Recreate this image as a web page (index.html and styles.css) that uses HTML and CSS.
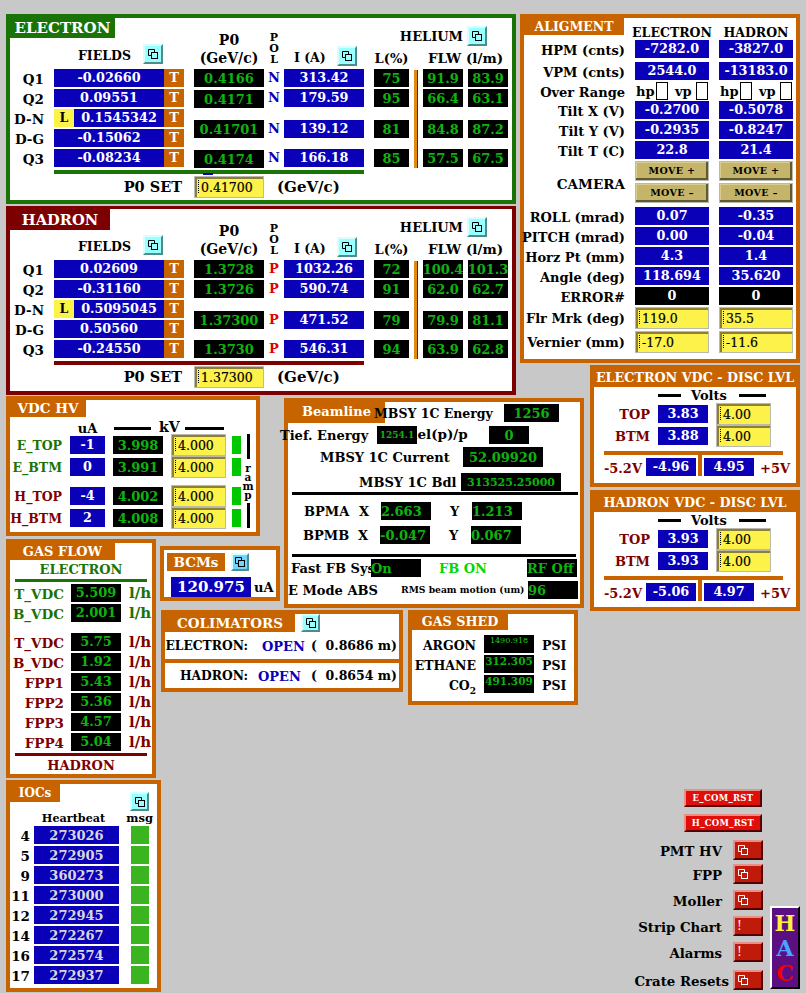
FILE: index.html
```html
<!DOCTYPE html>
<html lang="en">
<head>
<meta charset="utf-8">
<title>HAC</title>
<link rel="stylesheet" href="styles.css">
</head>
<body>
<svg class="defs" width="0" height="0" aria-hidden="true">
  <symbol id="rel" viewBox="0 0 12 12"><path d="M1.5 7.5V1.5H7.5V4.5M1.5 7.5H4.5" fill="none" stroke="currentColor" stroke-width="1"/><rect x="4.5" y="4.5" width="6" height="6" fill="none" stroke="currentColor" stroke-width="1"/></symbol>
</svg>
<main class="page">

  <section class="panel spec electron">
    <h2 class="tab tab-electron">ELECTRON</h2>
    <div class="head-fields"><span>FIELDS</span><span class="rbtn"><svg class="ic"><use href="#rel"/></svg></span></div>
    <div class="head-p0">P0<br>(GeV/c)</div>
    <div class="head-pol">P<br>O<br>L</div>
    <div class="head-i"><span>I (A)</span><span class="rbtn"><svg class="ic"><use href="#rel"/></svg></span></div>
    <div class="head-l">L(%)</div>
    <div class="head-flw">FLW (l/m)</div>
    <div class="head-he"><span>HELIUM</span><span class="rbtn"><svg class="ic"><use href="#rel"/></svg></span></div>

    <div class="lab r1">Q1</div><div class="field r1"><span class="val grow">-0.02660</span><span class="t">T</span></div>
    <div class="lab r2">Q2</div><div class="field r2"><span class="val grow">0.09551</span><span class="t">T</span></div>
    <div class="lab r3">D-N</div><div class="field r3"><span class="l">L</span><span class="val grow">0.1545342</span><span class="t">T</span></div>
    <div class="lab r4">D-G</div><div class="field r4"><span class="val grow">-0.15062</span><span class="t">T</span></div>
    <div class="lab r5">Q3</div><div class="field r5"><span class="val grow">-0.08234</span><span class="t">T</span></div>

    <div class="blk p0 r1">0.4166</div><div class="blk p0 r2">0.4171</div><div class="blk p0 r34">0.41701</div><div class="blk p0 r5">0.4174</div>
    <div class="pol pol-n r1">N</div><div class="pol pol-n r2">N</div><div class="pol pol-n r34">N</div><div class="pol pol-n r5">N</div>
    <div class="val cur r1">313.42</div><div class="val cur r2">179.59</div><div class="val cur r34">139.12</div><div class="val cur r5">166.18</div>
    <div class="blk lev r1">75</div><div class="blk lev r2">95</div><div class="blk lev r34">81</div><div class="blk lev r5">85</div>
    <div class="hebar"></div>
    <div class="blk f1 r1">91.9</div><div class="blk f2 r1">83.9</div>
    <div class="blk f1 r2">66.4</div><div class="blk f2 r2">63.1</div>
    <div class="blk f1 r34">84.8</div><div class="blk f2 r34">87.2</div>
    <div class="blk f1 r5">57.5</div><div class="blk f2 r5">67.5</div>

    <div class="rule rule-electron"></div>
    <div class="ghost"></div>
    <div class="set-lab">P0 SET</div>
    <div class="inp set-inp"><i></i>0.41700</div>
    <div class="set-unit">(GeV/c)</div>
  </section>

  <section class="panel spec hadron">
    <h2 class="tab tab-hadron">HADRON</h2>
    <div class="head-fields"><span>FIELDS</span><span class="rbtn"><svg class="ic"><use href="#rel"/></svg></span></div>
    <div class="head-p0">P0<br>(GeV/c)</div>
    <div class="head-pol">P<br>O<br>L</div>
    <div class="head-i"><span>I (A)</span><span class="rbtn"><svg class="ic"><use href="#rel"/></svg></span></div>
    <div class="head-l">L(%)</div>
    <div class="head-flw">FLW (l/m)</div>
    <div class="head-he"><span>HELIUM</span><span class="rbtn"><svg class="ic"><use href="#rel"/></svg></span></div>

    <div class="lab r1">Q1</div><div class="field r1"><span class="val grow">0.02609</span><span class="t">T</span></div>
    <div class="lab r2">Q2</div><div class="field r2"><span class="val grow">-0.31160</span><span class="t">T</span></div>
    <div class="lab r3">D-N</div><div class="field r3"><span class="l">L</span><span class="val grow">0.5095045</span><span class="t">T</span></div>
    <div class="lab r4">D-G</div><div class="field r4"><span class="val grow">0.50560</span><span class="t">T</span></div>
    <div class="lab r5">Q3</div><div class="field r5"><span class="val grow">-0.24550</span><span class="t">T</span></div>

    <div class="blk p0 r1">1.3728</div><div class="blk p0 r2">1.3726</div><div class="blk p0 r34">1.37300</div><div class="blk p0 r5">1.3730</div>
    <div class="pol pol-p r1">P</div><div class="pol pol-p r2">P</div><div class="pol pol-p r34">P</div><div class="pol pol-p r5">P</div>
    <div class="val cur r1">1032.26</div><div class="val cur r2">590.74</div><div class="val cur r34">471.52</div><div class="val cur r5">546.31</div>
    <div class="blk lev r1">72</div><div class="blk lev r2">91</div><div class="blk lev r34">79</div><div class="blk lev r5">94</div>
    <div class="hebar"></div>
    <div class="blk f1 r1">100.4</div><div class="blk f2 r1">101.3</div>
    <div class="blk f1 r2">62.0</div><div class="blk f2 r2">62.7</div>
    <div class="blk f1 r34">79.9</div><div class="blk f2 r34">81.1</div>
    <div class="blk f1 r5">63.9</div><div class="blk f2 r5">62.8</div>

    <div class="rule rule-hadron"></div>
    <div class="set-lab">P0 SET</div>
    <div class="inp set-inp"><i></i>1.37300</div>
    <div class="set-unit">(GeV/c)</div>
  </section>

  <section class="panel alignment">
    <h2 class="tab tab-align">ALIGMENT</h2>
    <div class="al-h c1">ELECTRON</div><div class="al-h c2">HADRON</div>

    <div class="al-l">HPM (cnts)</div><div class="val c1">-7282.0</div><div class="val c2">-3827.0</div>
    <div class="al-l">VPM (cnts)</div><div class="val c1">2544.0</div><div class="val c2">-13183.0</div>
    <div class="al-l">Over Range</div>
    <div class="over c1"><span>hp</span><b></b><span>vp</span><b></b></div>
    <div class="over c2"><span>hp</span><b></b><span>vp</span><b></b></div>
    <div class="al-l">Tilt X (V)</div><div class="val c1">-0.2700</div><div class="val c2">-0.5078</div>
    <div class="al-l">Tilt Y (V)</div><div class="val c1">-0.2935</div><div class="val c2">-0.8247</div>
    <div class="al-l">Tilt T (C)</div><div class="val c1">22.8</div><div class="val c2">21.4</div>
    <div class="al-l cam">CAMERA</div>
    <div class="move c1"><span>MOVE +</span></div><div class="move c2"><span>MOVE +</span></div>
    <div class="move c1"><span>MOVE –</span></div><div class="move c2"><span>MOVE –</span></div>
    <div class="al-l">ROLL (mrad)</div><div class="val c1">0.07</div><div class="val c2">-0.35</div>
    <div class="al-l">PITCH (mrad)</div><div class="val c1">0.00</div><div class="val c2">-0.04</div>
    <div class="al-l">Horz Pt (mm)</div><div class="val c1">4.3</div><div class="val c2">1.4</div>
    <div class="al-l">Angle (deg)</div><div class="val c1">118.694</div><div class="val c2">35.620</div>
    <div class="al-l">ERROR#</div><div class="val err c1">0</div><div class="val err c2">0</div>
    <div class="al-l al-i">Flr Mrk (deg)</div><div class="inp c1"><i></i>119.0</div><div class="inp c2"><i></i>35.5</div>
    <div class="al-l al-i">Vernier (mm)</div><div class="inp c1"><i></i>-17.0</div><div class="inp c2"><i></i>-11.6</div>
  </section>

  <section class="panel disc disc-e">
    <h2 class="disc-title">ELECTRON VDC - DISC LVL</h2>
    <div class="volts"><s class="vl1"></s><span>Volts</span><s class="vl2"></s></div>
    <div class="disc-grid">
      <div class="disc-l">TOP</div><div class="val">3.83</div><div class="inp"><i></i>4.00</div>
      <div class="disc-l">BTM</div><div class="val">3.88</div><div class="inp"><i></i>4.00</div>
    </div>
    <div class="disc-sep"></div>
    <div class="disc-pw"><span class="pw-l">-5.2V</span><div class="val">-4.96</div><s class="stem"></s><div class="val">4.95</div><span class="pw-r">+5V</span></div>
  </section>

  <section class="panel disc disc-h">
    <h2 class="disc-title">HADRON VDC - DISC LVL</h2>
    <div class="volts"><s class="vl1"></s><span>Volts</span><s class="vl2"></s></div>
    <div class="disc-grid">
      <div class="disc-l">TOP</div><div class="val">3.93</div><div class="inp"><i></i>4.00</div>
      <div class="disc-l">BTM</div><div class="val">3.93</div><div class="inp"><i></i>4.00</div>
    </div>
    <div class="disc-sep"></div>
    <div class="disc-pw"><span class="pw-l">-5.2V</span><div class="val">-5.06</div><s class="stem"></s><div class="val">4.97</div><span class="pw-r">+5V</span></div>
  </section>

  <section class="panel hv">
    <h2 class="tab tab-hv">VDC HV</h2>
    <div class="hv-ua">uA</div>
    <div class="hv-kv"><s class="kl1"></s><span>kV</span><s class="kl2"></s></div>
    <div class="hv-l el r1">E_TOP</div><div class="val h18 r1">-1</div><div class="blk hv-b r1">3.998</div><div class="inp r1"><i></i>4.000</div><div class="hv-g r1"></div>
    <div class="hv-l el r2">E_BTM</div><div class="val h18 r2">0</div><div class="blk hv-b r2">3.991</div><div class="inp r2"><i></i>4.000</div><div class="hv-g r2"></div>
    <div class="hv-l hd r3">H_TOP</div><div class="val h18 r3">-4</div><div class="blk hv-b r3">4.002</div><div class="inp r3"><i></i>4.000</div><div class="hv-g r3"></div>
    <div class="hv-l hd r4">H_BTM</div><div class="val h18 r4">2</div><div class="blk hv-b r4">4.008</div><div class="inp r4"><i></i>4.000</div><div class="hv-g r4"></div>
    <div class="ramp"><s class="rl1"></s><span>r<br>a<br>m<br>p</span><s class="rl2"></s></div>
  </section>

  <section class="panel beamline">
    <h2 class="tab tab-beam">Beamline</h2>
    <div class="bl-row bl-1"><span class="bl-t">MBSY 1C Energy</span><div class="blk">1256</div></div>
    <div class="bl-row bl-2"><span class="bl-t t-tief">Tief. Energy</span><span class="bl-t t-del">del(p)/p</span><div class="blk b-tief">1254.1</div><div class="blk b-del">0</div></div>
    <div class="bl-row bl-3"><span class="bl-t">MBSY 1C Current</span><div class="blk">52.09920</div></div>
    <div class="bl-row bl-4"><span class="bl-t">MBSY 1C Bdl</span><div class="blk">313525.25000</div></div>
    <div class="bl-hr hr1"></div>
    <div class="bpm bpm-a"><span class="bpm-n">BPMA</span><span class="bpm-x">X</span><div class="blk bl-left">2.663</div><span class="bpm-y">Y</span><div class="blk bl-left">1.213</div></div>
    <div class="bpm bpm-b"><span class="bpm-n">BPMB</span><span class="bpm-x">X</span><div class="blk bl-left">-0.047</div><span class="bpm-y">Y</span><div class="blk bl-left">0.067</div></div>
    <div class="bl-hr hr2"></div>
    <div class="fb"><span class="fb-t">Fast FB Sys</span><div class="blk bl-left">On</div><span class="fb-on">FB ON</span><div class="blk bl-left">RF Off</div></div>
    <div class="emode"><span class="em-t">E Mode ABS</span><span class="rms">RMS beam motion (um)</span><div class="blk bl-left">96</div></div>
  </section>

  <section class="panel gas">
    <h2 class="tab tab-gas">GAS FLOW</h2>
    <div class="gas-h el">ELECTRON</div>
    <div class="gas-hr gr-e"></div>
    <div class="gas-row el"><span>T_VDC</span><div class="blk">5.509</div><em>l/h</em></div>
    <div class="gas-row el"><span>B_VDC</span><div class="blk">2.001</div><em>l/h</em></div>
    <div class="gas-row hd gas-gap"><span>T_VDC</span><div class="blk">5.75</div><em>l/h</em></div>
    <div class="gas-row hd"><span>B_VDC</span><div class="blk">1.92</div><em>l/h</em></div>
    <div class="gas-row hd"><span>FPP1</span><div class="blk">5.43</div><em>l/h</em></div>
    <div class="gas-row hd"><span>FPP2</span><div class="blk">5.36</div><em>l/h</em></div>
    <div class="gas-row hd"><span>FPP3</span><div class="blk">4.57</div><em>l/h</em></div>
    <div class="gas-row hd"><span>FPP4</span><div class="blk">5.04</div><em>l/h</em></div>
    <div class="gas-hr gr-h"></div>
    <div class="gas-h hd">HADRON</div>
  </section>

  <section class="panel bcm">
    <div class="bcm-top"><h2 class="tab-bcm">BCMs</h2><span class="rbtn rbtn-blue"><svg class="ic"><use href="#rel"/></svg></span></div>
    <div class="bcm-val"><div class="val big">120.975</div><span>uA</span></div>
  </section>

  <section class="panel colim">
    <div class="col-top"><h2 class="tab-col">COLIMATORS</h2><span class="rbtn"><svg class="ic"><use href="#rel"/></svg></span></div>
    <div class="col-row col-e"><span class="col-l">ELECTRON:</span><span class="col-o">OPEN</span><span class="col-v">( &nbsp;0.8686 m)</span></div>
    <div class="col-row col-h"><span class="col-l">HADRON:</span><span class="col-o">OPEN</span><span class="col-v">( &nbsp;0.8654 m)</span></div>
  </section>

  <section class="panel shed">
    <h2 class="tab tab-shed">GAS SHED</h2>
    <div class="shed-grid">
      <span class="shed-l">ARGON</span><div class="blk tiny">1490.918</div><span class="shed-u">PSI</span>
      <span class="shed-l">ETHANE</span><div class="blk small">312.305</div><span class="shed-u">PSI</span>
      <span class="shed-l">CO<sub>2</sub></span><div class="blk small">491.309</div><span class="shed-u">PSI</span>
    </div>
  </section>

  <section class="panel iocs">
    <h2 class="tab tab-ioc">IOCs</h2>
    <span class="rbtn ioc-btn"><svg class="ic"><use href="#rel"/></svg></span>
    <div class="ioc-hb">Heartbeat</div><div class="ioc-msg">msg</div>
    <div class="ioc-n">4</div><div class="val hb">273026</div><div class="ioc-g"></div>
    <div class="ioc-n">5</div><div class="val hb">272905</div><div class="ioc-g"></div>
    <div class="ioc-n">9</div><div class="val hb">360273</div><div class="ioc-g"></div>
    <div class="ioc-n">11</div><div class="val hb">273000</div><div class="ioc-g"></div>
    <div class="ioc-n">12</div><div class="val hb">272945</div><div class="ioc-g"></div>
    <div class="ioc-n">14</div><div class="val hb">272267</div><div class="ioc-g"></div>
    <div class="ioc-n">16</div><div class="val hb">272574</div><div class="ioc-g"></div>
    <div class="ioc-n">17</div><div class="val hb">272937</div><div class="ioc-g"></div>
  </section>

  <nav class="controls">
    <div class="ctl-col">
      <div class="com com-e">E_COM_RST</div>
      <div class="com com-h">H_COM_RST</div>
      <div class="nav n1"><span>PMT HV</span><div class="rbt"><svg class="ic"><use href="#rel"/></svg></div></div>
      <div class="nav n2"><span>FPP</span><div class="rbt"><svg class="ic"><use href="#rel"/></svg></div></div>
      <div class="nav n3"><span>Moller</span><div class="rbt"><svg class="ic"><use href="#rel"/></svg></div></div>
      <div class="nav n4"><span>Strip Chart</span><div class="rbt">!</div></div>
      <div class="nav n5"><span>Alarms</span><div class="rbt">!</div></div>
      <div class="nav n6"><span>Crate Resets</span><div class="rbt"><svg class="ic"><use href="#rel"/></svg></div></div>
    </div>
    <div class="hac"><span class="h-h">H</span><span class="h-a">A</span><span class="h-c">C</span></div>
  </nav>
</main>
</body>
</html>
```

FILE: styles.css
```css
:root{
  --bg:#c8c8c8; --green:#1a7306; --maroon:#7d0000; --orange:#c86400; --blue:#0a00b8;
  --lit:#0fb30f; --yellow:#fdf24a;
}
*{box-sizing:border-box}
html,body{margin:0;padding:0;background:var(--bg)}
body{font:bold 13px/1 "DejaVu Serif",serif;color:#000;width:806px;height:993px;overflow:hidden}
.defs{display:block;height:0}
h2{margin:0;font:inherit}
s,em{text-decoration:none;font-style:normal}

.page{display:grid;width:806px;height:993px;padding:14px 6px 0;
  grid-template-columns:155px 123px 124px 112px 70px 210px;
  grid-template-rows:192px 159px 31px 94px 49px 71px 170px 213px}
.page>*{align-self:start;justify-self:start}

.panel{background:#fff;border:4px solid var(--orange);font-size:12.5px}
.tab{display:flex;align-items:center;justify-content:center;color:#fff;background:var(--orange);white-space:nowrap}

/* shared widgets */
.val,.blk{display:flex;align-items:center;justify-content:center;height:18px;font-size:13px;white-space:nowrap;overflow:hidden}
.val{background:var(--blue);color:#fff;font-size:12.8px}
.blk{background:#000;color:var(--lit)}
.bl-left{justify-content:flex-start}
.inp{display:flex;align-items:center;height:22px;background:var(--yellow);border:1px solid #b9b9ae;box-shadow:inset 2px 2px 0 #8d7f33;font-weight:400;font-size:12.5px;color:#000;padding:3px 0 0 3px;white-space:nowrap;-webkit-text-stroke:.2px #000}
.inp i{width:0;height:13px;border-left:1px dotted #000;margin-right:2px;margin-top:-4px}
.rbtn{display:flex;align-items:center;justify-content:center;width:20px;height:20px;background:#99ffff;border:2px solid;border-color:#d6ffff #4c8c8c #4c8c8c #d6ffff;color:#000}
.rbtn-blue{width:18px;height:18px;background:#6fd4ff}
.ic{width:12px;height:12px}

/* spectrometer panels */
.spec{width:510px;height:190px;display:grid;align-items:start;
  grid-template-columns:44px 130px 10px 70px 20px 80px 10px 35px 14px 40px 5px 40px;
  grid-template-rows:51px repeat(5,20px) 7px 22px}
.electron{grid-column:1/5;grid-row:1/2;border-color:var(--green)}
.hadron{grid-column:1/5;grid-row:2/4;height:189px;border-color:var(--maroon);border-top-width:3px;grid-template-rows:51px repeat(5,20px) 6px 22px}
.spec .tab{grid-row:1;grid-column:1/-1;justify-self:start;font-size:15px;height:20px;padding-top:1px}
.tab-electron{width:105px;background:var(--green)}
.tab-hadron{width:100px;height:21px!important;background:var(--maroon);font-size:14.7px!important;padding-top:2px!important}
.head-fields{grid-row:1;grid-column:2;display:flex;align-items:center;margin:26px 0 0 24px;height:20px}
.head-fields span:first-child{padding-top:4px;width:51px}
.head-fields .rbtn{margin-left:14px}
.head-p0{grid-row:1;grid-column:4;justify-self:center;text-align:center;line-height:18px;margin-top:13px;white-space:nowrap;font-size:14px}
.head-pol{grid-row:1;grid-column:5;text-align:center;line-height:11px;margin-top:14px;font-size:11px}
.head-i{grid-row:1;grid-column:6;display:flex;align-items:center;margin:28px 0 0 10px;height:20px;white-space:nowrap}
.head-i span:first-child{padding-top:4px;width:32px}
.head-i .rbtn{margin-left:11px}
.head-l{grid-row:1;grid-column:8;justify-self:center;text-align:center;margin-top:34px;white-space:nowrap;font-size:13px}
.head-flw{grid-row:1;grid-column:10/13;justify-self:center;text-align:center;margin-top:34px;white-space:nowrap;font-size:13.5px}
.head-he{grid-row:1;grid-column:8/13;display:flex;align-items:center;justify-content:flex-end;margin:8px 21px 0 0;height:20px;gap:4px;font-size:13px}
.spec .r1{grid-row:2}.spec .r2{grid-row:3}.spec .r3{grid-row:4}.spec .r4{grid-row:5}.spec .r5{grid-row:6}
.spec .r34{grid-row:4/6;align-self:center}
.electron .p0.r2,.electron .p0.r5{margin-top:1px}
.lab{grid-column:1;text-align:right;line-height:20px;white-space:nowrap;padding-right:10px;font-size:13.5px}
.field{grid-column:2;display:flex;height:18px}
.grow{flex:1}
.t{width:20px;background:var(--orange);color:#fff;text-align:center;line-height:18px;font-size:13px}
.l{width:20px;background:var(--yellow);color:#000;text-align:center;line-height:18px;font-weight:700}
.p0{grid-column:4}.cur{grid-column:6}.lev{grid-column:8}.f1{grid-column:10}.f2{grid-column:12}
.pol{grid-column:5;text-align:center;line-height:18px;font-size:13px}
.pol-n{color:var(--blue)}.pol-p{color:#e00000}
.hebar{grid-row:2/7;grid-column:9;width:4px;height:98px;margin:1px 0 0 5px;background:#e08a10;border-right:1px solid #333}
.rule{grid-row:7;grid-column:2/7;height:4px;margin-top:1px}
.rule-electron{background:var(--green)}.rule-hadron{background:var(--maroon)}
.ghost{grid-row:7;grid-column:4;width:10px;height:2px;margin:4px 0 0 9px;background:var(--blue)}
.set-lab{grid-row:8;grid-column:2;text-align:right;padding-right:2px;font-size:14.5px;line-height:22px}
.set-inp{grid-row:8;grid-column:4}
.set-unit{grid-row:8;grid-column:5/9;margin-left:13px;font-size:15px;line-height:22px}

/* alignment */
.alignment{grid-column:5/7;grid-row:1/3;width:280px;height:349px;display:grid;align-items:start;
  grid-template-columns:101px 10px 74px 10px 74px;
  grid-template-rows:22px 22px 20px 19px 20px 20px 20px 22px 24px repeat(5,20px) 24px 24px}
.tab-align{grid-row:1;grid-column:1/-1;justify-self:start;width:100px;height:17px;font-size:12.5px;padding-top:2px}
.al-h{grid-row:1;font-size:12.5px;justify-self:center;text-align:center;white-space:nowrap;align-self:end;margin-bottom:1px}
.al-l{grid-column:1;justify-self:end;line-height:22px;white-space:nowrap;font-size:13px}
.al-i{margin-top:1px}
.alignment .c1{grid-column:3}.alignment .c2{grid-column:5}
.alignment .inp{height:22px}
.over{display:flex;align-items:center;height:18px;font-size:13px;white-space:nowrap}
.over span{width:21px;padding-left:1px}
.over span:nth-of-type(2){width:22px}
.over b{display:block;width:12px;height:18px;border:1px solid #000;background:#fff;margin-right:6px}
.over b:last-child{margin-right:0}
.cam{grid-row:8/10;align-self:center;font-size:13.5px}
.move{height:20px;border:1px solid #b9b9ae;background:#c4b56a;display:flex;align-items:center;justify-content:center;box-shadow:inset -2px -2px 0 #5f5a30,inset 1px 1px 0 #d8cc90;font-size:9.5px;letter-spacing:.4px}
.err{background:#000}

/* disc */
.disc{grid-column:6;width:210px}
.disc-e{grid-row:3/5;height:122px}
.disc-h{grid-row:5/7;height:121px}
.disc-title{height:18px;background:var(--orange);color:#fff;font-size:12.75px;line-height:18px;text-align:center;white-space:nowrap}
.volts{display:flex;align-items:center;height:16px;font-size:13px;padding-left:64px}
.volts s{height:3px;background:#000;display:block}
.vl1{width:23px;margin-right:10px}.vl2{width:27px;margin-left:12px}
.disc-grid{display:grid;grid-template-columns:56px 50px 55px;column-gap:8px;grid-auto-rows:22px;align-items:center}
.disc-l{color:var(--maroon);text-align:right;font-size:13px}
.disc-grid .val{height:18px}
.disc-sep{height:4px;width:179px;margin:4px 0 0 10px;background:var(--orange)}
.disc-pw{display:flex;align-items:flex-start;height:22px;color:var(--maroon)}
.disc-pw .val{width:50px;margin-top:3px}
.pw-l{width:50px;padding:7px 2px 0 0;text-align:right;font-size:13px;margin-right:2px}
.stem{display:block;width:4px;height:21px;margin:0 2px;background:var(--orange)}
.pw-r{margin-left:6px;padding-top:7px;font-size:13px}

/* HV */
.hv{grid-column:1/3;grid-row:4/6;width:254px;height:140px;display:grid;align-items:start;
  grid-template-columns:60px 35px 8px 50px 8px 55px 6px 9px 3px 8px;
  grid-template-rows:34px 22px 22px 7px 22px 22px}
.tab-hv{grid-row:1;grid-column:1/-1;justify-self:start;width:76px;height:17px;font-size:13.5px}
.hv-ua{grid-row:1;grid-column:2;align-self:end;text-align:center;font-size:13px;margin-bottom:-1px}
.hv-kv{grid-row:1;grid-column:4/7;display:flex;align-items:flex-end;align-self:end;font-size:14px;padding-left:1px}
.hv-kv s{display:block;height:3px;background:#000;margin-bottom:4px}
.kl1{width:37px;margin-right:8px}.kl2{width:39px;margin-left:5px}
.hv .r1{grid-row:2}.hv .r2{grid-row:3}.hv .r3{grid-row:5}.hv .r4{grid-row:6}
.hv-l{grid-column:1;text-align:right;padding-right:8px;line-height:23px;white-space:nowrap;font-size:12.5px}
.el{color:var(--green)}.hd{color:var(--maroon)}
.hv .val{grid-column:2;margin-top:2px}
.hv-b{grid-column:4;margin-top:2px}
.hv .inp{grid-column:6}
.hv-g{grid-column:8;width:9px;height:18px;margin-top:2px;background:#00c800}
.ramp{grid-row:2/7;grid-column:10;display:flex;flex-direction:column;align-items:center;font-size:10.5px;line-height:9px;text-align:center}
.ramp s{display:block;width:3px;background:#000}
.rl1{height:25px;margin-bottom:5px}.rl2{height:25px;margin-top:3px}

/* beamline */
.beamline{grid-column:3/6;grid-row:4/7;margin-top:2px;width:300px;height:210px;display:flex;flex-direction:column}
.tab-beam{width:97px;height:21px;font-size:13px;margin-bottom:-19px;flex:none;padding-bottom:2px}
.bl-row{display:flex;align-items:center;font-size:13px;white-space:nowrap;flex:none}
.bl-1{height:18px;margin:0 0 0 86px}.bl-1 .bl-t{width:130px;font-size:12.5px;padding-top:3px}.bl-1 .blk{width:55px}
.bl-2{display:grid;grid-template-columns:97px 40px 72px 40px;align-items:center;height:18px;margin:4px 0 0 -8px}
.bl-2>*{grid-row:1}
.t-tief{grid-column:1}
.t-del{grid-column:2/4;margin-left:31px;font-size:13.5px}
.b-tief{grid-column:2;font-size:9px}
.b-del{grid-column:4}
.bl-3{height:20px;margin:3px 0 0 32px}.bl-3 .bl-t{width:143px}.bl-3 .blk{width:80px;height:20px}
.bl-4{height:18px;margin:6px 0 0 71px}.bl-4 .bl-t{width:102px}.bl-4 .blk{width:100px;font-size:11px}
.bl-hr{height:3px;background:#000;flex:none}
.hr1{margin:1px 2px 0 4px}
.hr2{margin:10px 4px 0 4px}
.bpm{display:flex;align-items:center;height:18px;font-size:13px;flex:none}
.bpm .blk{width:50px}
.bpm-a{margin-top:7px;padding-left:16px}
.bpm-b{margin-top:6px;padding-left:15px}
.bpm-n{width:55px}.bpm-x{width:22px}.bpm-y{width:22px;margin-left:19px}
.fb{display:flex;align-items:center;height:18px;margin-top:2px;padding-left:3px;flex:none}
.fb .blk{width:50px}
.fb-t{width:80px;white-space:nowrap;font-size:13px}
.fb-on{color:#00d800;width:106px;padding-left:18px;font-size:13px;white-space:nowrap}
.emode{display:flex;align-items:center;height:18px;margin-top:4px;flex:none;white-space:nowrap}
.emode .blk{width:50px;margin-left:4px}
.em-t{width:113px;font-size:13px}
.rms{width:123px;font-size:9.2px}

/* gas */
.gas{grid-column:1;grid-row:6/8;width:150px;height:239px}
.tab-gas{width:105px;height:17px;font-size:13px}
.gas-h{text-align:center;font-size:13px;line-height:19px}
.gas-hr{height:3px;margin:0 5px}
.gr-e{background:var(--green);margin-bottom:2px}
.gr-h{background:var(--maroon)}
.gas-row{display:grid;grid-template-columns:61px 50px auto;height:20px;align-items:start;line-height:20px;font-size:13.5px;white-space:nowrap}
.gas-row span{text-align:right;padding-right:7px}
.gas-row em{padding-left:8px;font-size:15px;line-height:18px}
.gas-gap{margin-top:9px}

/* bcm */
.bcm{grid-column:2;grid-row:6/7;margin:7px 0 0 -1px;width:120px;height:55px;padding:3px 0 0 3px}
.bcm-top{display:flex;gap:6px}
.tab-bcm{width:58px;height:18px;background:var(--orange);color:#fff;text-align:center;line-height:18px;font-size:13.5px}
.bcm-val{display:flex;align-items:center;margin:6px 0 0 4px;gap:3px;font-size:13px}
.big{width:80px;height:20px;font-size:15px}

/* colimators */
.colim{grid-column:2/4;grid-row:7;width:242px;height:82px;background:var(--orange)}
.col-top{display:flex;align-items:center;height:18px;background:#fff}
.tab-col{width:130px;height:18px;background:var(--orange);color:#fff;text-align:center;line-height:18px;font-size:13.5px;margin-right:6px}
.col-top .rbtn{width:19px;height:18px}
.col-row{display:flex;align-items:center;background:#fff;font-size:12.5px;white-space:nowrap;padding-top:2px}
.col-e{height:27px}.col-h{height:25px;margin-top:4px}
.col-l{width:83px;display:flex;justify-content:flex-end;font-size:12.3px}
.col-o{color:var(--blue);font-size:13px}
.col-e .col-o{margin-left:14px;width:49px}
.col-h .col-o{margin-left:10px;width:53px}

/* gas shed */
.shed{grid-column:4/6;grid-row:7;width:170px;height:95px}
.tab-shed{width:96px;height:16px;font-size:12.75px}
.shed-grid{display:grid;grid-template-columns:64px 50px auto;column-gap:8px;grid-auto-rows:20px;margin-top:5px;align-items:start;font-size:12.5px;line-height:21px}
.shed-l{text-align:right;white-space:nowrap}
.shed-l sub{font-size:9px;line-height:0}
.tiny{font-size:8px;align-items:flex-start;padding-top:2px;font-weight:400;line-height:1;color:#19d019}
.small{font-size:10.5px;align-items:flex-start;padding-top:1px;line-height:1}

/* iocs */
.iocs{grid-column:1;grid-row:8;width:155px;height:212px;display:grid;align-items:start;
  grid-template-columns:24px 85px 12px 18px;grid-template-rows:42px repeat(8,20px)}
.tab-ioc{grid-row:1;grid-column:1/-1;justify-self:start;width:50px;height:18px;font-size:12px}
.ioc-btn{grid-row:1;grid-column:4;width:19px;height:19px;margin-top:8px;margin-left:-1px}
.ioc-hb{grid-row:1;grid-column:2;justify-self:center;text-align:center;align-self:end;margin:0 6px 2px 0;font-size:11.2px;white-space:nowrap}
.ioc-msg{grid-row:1;grid-column:3/5;align-self:end;justify-self:end;margin:0 -4px 2px 0;font-size:11.5px}
.ioc-n{grid-column:1;text-align:right;padding-right:4px;line-height:20px;font-size:13.5px}
.hb{color:#d8d8d8;grid-column:2;font-size:13px}
.ioc-g{grid-column:4;height:18px;background:#3ab41f}

/* controls */
.controls{grid-column:5/7;grid-row:8;justify-self:end!important;width:180px;display:flex;padding-top:9px;gap:7px}
.ctl-col{width:143px;display:flex;flex-direction:column;align-items:flex-end;flex:none}
.com{width:78px;height:18px;background:#e00f0a;color:#fff;border:2px solid;border-color:#e88f88 #500 #500 #e88f88;display:flex;align-items:center;justify-content:center;font-size:8.5px;letter-spacing:.3px;margin-right:1px}
.com-h{margin-top:7px}
.nav{display:flex;align-items:center;height:20px;font-size:13.3px;white-space:nowrap}
.nav span{margin-right:11px;padding-top:4px}
.n1{margin-top:8px}.n2{margin-top:4px}.n3{margin-top:6px}.n4{margin-top:6px}.n5{margin-top:6px}.n6{margin-top:8px}
.n6 span{margin-right:4px}
.rbt{width:30px;height:20px;background:#c01a0a;color:#fff;border:2px solid;border-color:#e88f88 #500 #500 #e88f88;display:flex;align-items:center;padding-left:2px;font-weight:400;font-size:12px}
.rbt .ic{width:12px;height:12px}
.hac{width:30px;height:83px;margin-top:117px;background:#5b0f80;border:2px solid;border-color:#fff #000 #000 #fff;display:flex;flex-direction:column;align-items:center;padding-top:3px;font-size:22px;line-height:25px}
.h-h{color:#fff23a}.h-a{color:#4aa3ff}.h-c{color:#f00000}
```
